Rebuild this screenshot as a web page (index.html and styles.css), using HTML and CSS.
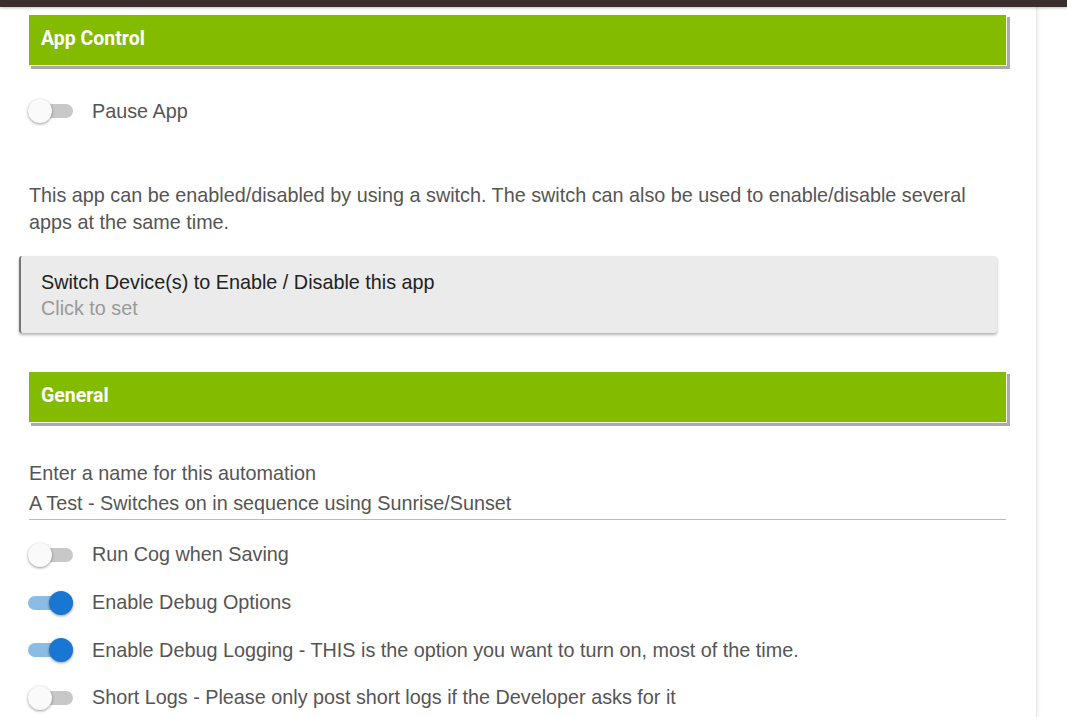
FILE: index.html
```html
<!DOCTYPE html>
<html lang="en">
<head>
    <meta charset="UTF-8">
    <meta name="viewport" content="width=device-width, initial-scale=1.0">
    <title>App Settings</title>
    <link rel="stylesheet" href="styles.css">
</head>
<body>
    <div id="topbar"></div>
    <div id="page">
        <div class="section-title">App Control</div>
        <div class="toggle-row first">
            <span class="toggle"><span class="knob"></span></span>
            <span class="toggle-label">Pause App</span>
        </div>
        <p class="info">This app can be enabled/disabled by using a switch. The switch can also be used to enable/disable several apps at the same time.</p>
        <div class="device-input">
            <div class="device-title">Switch Device(s) to Enable / Disable this app</div>
            <div class="device-hint">Click to set</div>
        </div>

        <div class="section-title">General</div>
        <div class="text-field">
            <div class="field-label">Enter a name for this automation</div>
            <div class="field-value">A Test - Switches on in sequence using Sunrise/Sunset</div>
        </div>
        <div class="toggle-list">
            <div class="toggle-row">
                <span class="toggle"><span class="knob"></span></span>
                <span class="toggle-label">Run Cog when Saving</span>
            </div>
            <div class="toggle-row">
                <span class="toggle on"><span class="knob"></span></span>
                <span class="toggle-label">Enable Debug Options</span>
            </div>
            <div class="toggle-row">
                <span class="toggle on"><span class="knob"></span></span>
                <span class="toggle-label">Enable Debug Logging - THIS is the option you want to turn on, most of the time.</span>
            </div>
            <div class="toggle-row">
                <span class="toggle"><span class="knob"></span></span>
                <span class="toggle-label">Short Logs - Please only post short logs if the Developer asks for it</span>
            </div>
        </div>
    </div>
</body>
</html>
```

FILE: styles.css
```css
body {
    margin: 0;
    padding: 0;
    background-color: #fff;
    color: #555;
    font-family: 'Liberation Sans', Arial, sans-serif;
    font-size: 19.8px;
    height: 717px;
    overflow: hidden;
}
#topbar {
    height: 7px;
    background-color: #3b2f2d;
    box-shadow: 0 1px 3px rgba(0, 0, 0, 0.25);
    position: relative;
    z-index: 2;
}
#page {
    width: 1037px;
    box-sizing: border-box;
    border-right: 1px solid #e6e6e6;
    box-shadow: 2px 0 3px rgba(0, 0, 0, 0.06);
    padding: 7px 0 0 0;
    height: 710px;
}
.section-title {
    margin-left: 28px;
    width: 979px;
    height: 52px;
    box-sizing: border-box;
    background-color: #82bb00;
    border: 1px solid #fff;
    box-shadow: 3px 3px 0 #aaa;
    color: #fff;
    font-family: Roboto, 'Liberation Sans', sans-serif;
    font-weight: bold;
    font-size: 19.5px;
    padding: 12px 0 0 12px;
}
.toggle-row {
    display: flex;
    align-items: center;
    height: 48px;
    padding-left: 28px;
}
.toggle-row.first {
    margin-top: 21px;
}
.toggle {
    position: relative;
    width: 45px;
    height: 14px;
    border-radius: 7px;
    background-color: #c8c8c8;
    margin-right: 19px;
    flex-shrink: 0;
}
.knob {
    position: absolute;
    top: -5px;
    left: 0;
    width: 24px;
    height: 24px;
    border-radius: 50%;
    background-color: #fafafa;
    box-shadow: 0 1px 3px rgba(0, 0, 0, 0.4);
}
.toggle.on {
    background-color: #8bbce6;
}
.toggle.on .knob {
    left: 21px;
    background-color: #1976d2;
}
.toggle-label {
    color: #555;
}
.info {
    margin: 47px 0 0 29px;
    width: 980px;
    line-height: 27px;
}
.device-input {
    margin: 20px 0 0 19px;
    width: 978px;
    height: 77px;
    box-sizing: border-box;
    background-color: #ebebeb;
    border-left: 2px solid #777;
    border-radius: 3px;
    box-shadow: 0 2px 3px rgba(0, 0, 0, 0.3);
    padding: 13px 0 0 20px;
}
.device-title {
    color: #222;
    line-height: 26px;
}
.device-hint {
    color: #999;
    line-height: 26px;
}
.device-input + .section-title {
    margin-top: 38px;
}
.text-field {
    margin: 35px 0 0 29px;
    width: 977px;
    border-bottom: 1px solid #bbb;
    padding-bottom: 1px;
}
.field-label,
.field-value {
    line-height: 30px;
}
.field-value {
    color: #555;
}
.toggle-list {
    margin-top: 11px;
}
.toggle-list .toggle-row {
    height: 47.7px;
    padding-left: 28px;
}
```
